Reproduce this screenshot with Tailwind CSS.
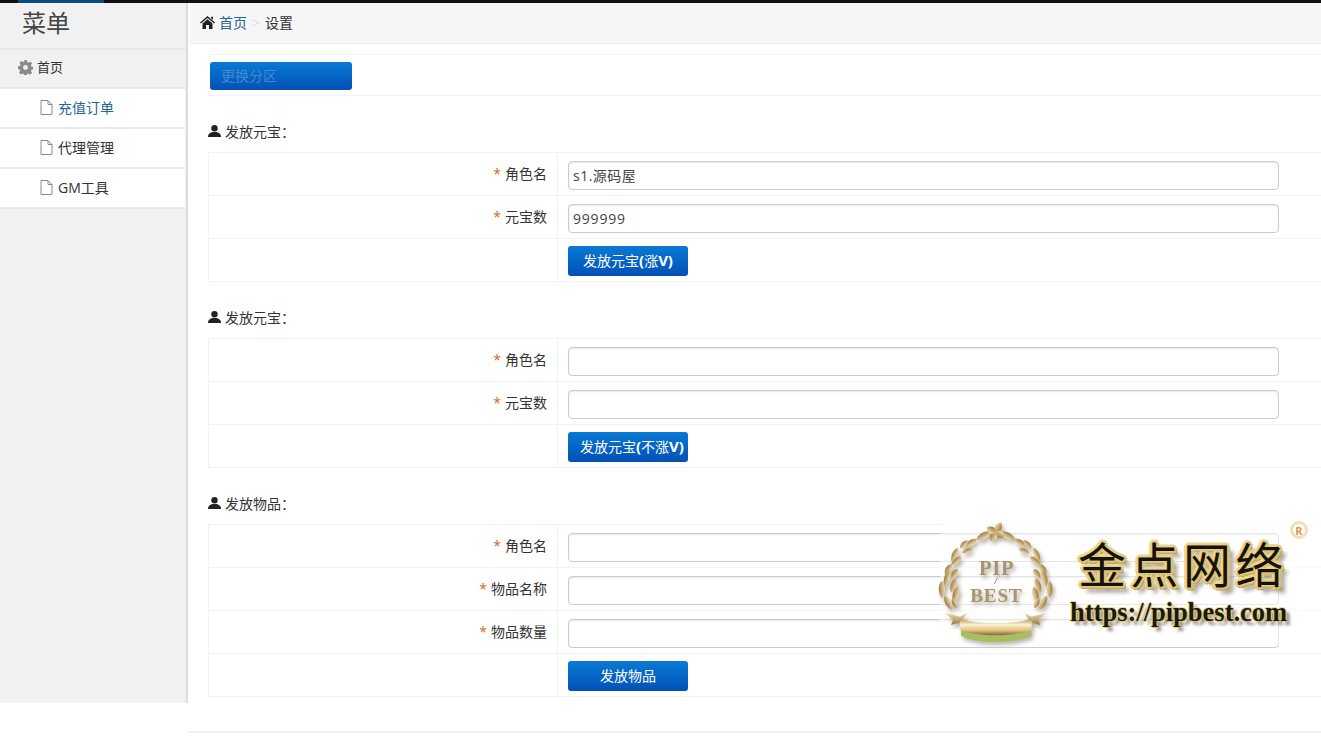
<!DOCTYPE html>
<html lang="zh-CN">

<head>
    <meta charset="UTF-8">
    <title>设置</title>
    <script src="https://cdn.jsdelivr.net/npm/@tailwindcss/browser@4"></script>
</head>

<body class="relative h-[751px] w-[1321px] overflow-hidden bg-white font-['Open_Sans','Noto_Sans_CJK_SC',sans-serif] text-[14px] text-[#333]">
    <!-- top bar -->
    <div class="h-[3px] bg-[#111] pl-[18px]">
        <div class="h-[3px] w-[86px] bg-[#0b4a80]"></div>
    </div>

    <div class="flex items-start">
        <!-- sidebar -->
        <aside class="h-[700px] w-[188px] shrink-0 border-r-2 border-[#dcdcdc] bg-[#f1f1f1]">
            <div class="h-[45px] pl-[22px] pt-[2px] text-[24px] leading-[36px] text-[#444]">菜单</div>
            <div class="flex h-[41px] items-center gap-[4px] border-y-2 border-[#e8e8e8] pb-[2px] pl-[18px] text-[13px]">
                <svg class="h-[15px] w-[15px] text-[#8a8a8a]" viewBox="0 0 16 16" fill="currentColor"><path fill-rule="evenodd" d="M6.6 0h2.8l.4 2.2 1.3.6L13 1.6l2 2-1.2 1.9.5 1.3 2.2.4v2.8l-2.200.4-.5 1.3 1.2 1.900-2 2-1.900-1.200-1.300.5-.4 2.200H6.600l-.4-2.200-1.300-.5L3 15.400l-2-2 1.200-1.900-.6-1.300L0 9.400V6.600l2.200-.4.6-1.300L1.600 3l2-2 1.900 1.200 1.300-.6zM8 5.400a2.600 2.600 0 1 0 0 5.200 2.600 2.600 0 0 0 0-5.200z"/></svg>
                <span>首页</span>
            </div>
            <div class="mr-[1px] box-content flex h-[36px] items-center gap-[5px] border-b-2 border-[#e8e8e8] bg-white pb-[2px] pl-[40px] text-[#2a6496]">
                <svg class="h-[15px] w-[13px] text-[#888]" viewBox="0 0 13 15" fill="none" stroke="currentColor"><path d="M1 .5h7l4 4v10H1zM8 .5v4h4"/></svg>
                <span>充值订单</span>
            </div>
            <div class="mr-[1px] box-content flex h-[36px] items-center gap-[5px] border-b-2 border-[#e8e8e8] bg-white pb-[2px] pl-[40px]">
                <svg class="h-[15px] w-[13px] text-[#888]" viewBox="0 0 13 15" fill="none" stroke="currentColor"><path d="M1 .5h7l4 4v10H1zM8 .5v4h4"/></svg>
                <span>代理管理</span>
            </div>
            <div class="mr-[1px] box-content flex h-[36px] items-center gap-[5px] border-b-2 border-[#e8e8e8] bg-white pb-[2px] pl-[40px]">
                <svg class="h-[15px] w-[13px] text-[#888]" viewBox="0 0 13 15" fill="none" stroke="currentColor"><path d="M1 .5h7l4 4v10H1zM8 .5v4h4"/></svg>
                <span>GM工具</span>
            </div>
        </aside>

        <!-- main -->
        <main class="min-w-0 flex-1">
            <div class="ml-[2px] flex h-[41px] items-center border-b border-[#ececec] bg-[#f6f6f6] pb-[2px] pl-[10px]">
                <svg class="mr-[4px] h-[13px] w-[15px] text-[#222]" viewBox="0 0 15 13" fill="currentColor"><path d="M7.500 0 15 6.600l-.9 1L7.500 1.900.9 7.600 0 6.600zM7.500 3.200l5 4.300V13H9V9H6v4H2.500V7.500z"/><path d="M11 .8h2v3l-2-1.700z"/></svg>
                <span class="text-[#2a6496]">首页</span>
                <span class="mx-[5px] text-[#ddd]">&gt;</span>
                <span>设置</span>
            </div>

            <div class="ml-[20px] mr-[-4px]">
                <div class="mt-[10px] flex h-[42px] items-center border-y border-[#f2f2f2] pl-[2px] pt-[2px]">
                    <button class="h-[28px] w-[142px] rounded-[3px] bg-linear-to-b from-[#0b7ad4] to-[#0450b5] pb-[2px] pl-[11px] text-left text-[#4489d2]">更换分区</button>
                </div>

                <!-- section 1 -->
                <div class="mt-[26px] flex h-[20px] items-center gap-[4px] pb-[2px]">
                    <svg class="h-[12px] w-[13px] text-[#222]" viewBox="0 0 13 12" fill="currentColor"><circle cx="6.500" cy="3.200" r="3.200"/><path d="M0 12c0-3.500 2.500-4.500 4.500-5h4c2 .5 4.500 1.500 4.500 5z"/></svg>
                    <span>发放元宝：</span>
                </div>
                <div class="mt-[10px] border border-[#f2f2f2]">
                    <div class="grid h-[43px] grid-cols-[349px_1fr] border-b border-[#f2f2f2]">
                        <div class="flex items-start justify-end border-r border-[#f2f2f2] pr-[10px] pt-[10px]"><span class="mr-[4px] text-[#d2691e]">*</span>角色名</div>
                        <div class="pl-[10px] pt-[8px]"><input value="s1.源码屋" class="h-[29px] w-[711px] rounded-[4px] border border-[#ccc] px-[4px] pb-[2px] text-[14px] tracking-[0.5px] text-[#444] shadow-[inset_0_1px_2px_rgba(0,0,0,0.1)]"></div>
                    </div>
                    <div class="grid h-[43px] grid-cols-[349px_1fr] border-b border-[#f2f2f2]">
                        <div class="flex items-start justify-end border-r border-[#f2f2f2] pr-[10px] pt-[10px]"><span class="mr-[4px] text-[#d2691e]">*</span>元宝数</div>
                        <div class="pl-[10px] pt-[8px]"><input value="999999" class="h-[29px] w-[711px] rounded-[4px] border border-[#ccc] px-[4px] text-[14px] tracking-[0.8px] text-[#444] shadow-[inset_0_1px_2px_rgba(0,0,0,0.1)]"></div>
                    </div>
                    <div class="grid h-[42px] grid-cols-[349px_1fr]">
                        <div class="border-r border-[#f2f2f2]"></div>
                        <div class="pl-[10px] pt-[7px]"><button class="h-[30px] w-[120px] whitespace-nowrap rounded-[3px] bg-linear-to-b from-[#0b7ad4] to-[#0450b5] pb-[2px] text-[14px] text-white">发放元宝<b class="text-[15px]">(</b>涨<b class="text-[15px]">V)</b></button></div>
                    </div>
                </div>

                <!-- section 2 -->
                <div class="mt-[26px] flex h-[20px] items-center gap-[4px] pb-[2px]">
                    <svg class="h-[12px] w-[13px] text-[#222]" viewBox="0 0 13 12" fill="currentColor"><circle cx="6.500" cy="3.200" r="3.200"/><path d="M0 12c0-3.500 2.500-4.500 4.500-5h4c2 .5 4.500 1.500 4.500 5z"/></svg>
                    <span>发放元宝：</span>
                </div>
                <div class="mt-[10px] border border-[#f2f2f2]">
                    <div class="grid h-[43px] grid-cols-[349px_1fr] border-b border-[#f2f2f2]">
                        <div class="flex items-start justify-end border-r border-[#f2f2f2] pr-[10px] pt-[10px]"><span class="mr-[4px] text-[#d2691e]">*</span>角色名</div>
                        <div class="pl-[10px] pt-[8px]"><input class="h-[29px] w-[711px] rounded-[4px] border border-[#ccc] px-[4px] shadow-[inset_0_1px_2px_rgba(0,0,0,0.1)]"></div>
                    </div>
                    <div class="grid h-[43px] grid-cols-[349px_1fr] border-b border-[#f2f2f2]">
                        <div class="flex items-start justify-end border-r border-[#f2f2f2] pr-[10px] pt-[10px]"><span class="mr-[4px] text-[#d2691e]">*</span>元宝数</div>
                        <div class="pl-[10px] pt-[8px]"><input class="h-[29px] w-[711px] rounded-[4px] border border-[#ccc] px-[4px] shadow-[inset_0_1px_2px_rgba(0,0,0,0.1)]"></div>
                    </div>
                    <div class="grid h-[42px] grid-cols-[349px_1fr]">
                        <div class="border-r border-[#f2f2f2]"></div>
                        <div class="pl-[10px] pt-[7px]"><button class="h-[30px] w-[120px] whitespace-nowrap rounded-[3px] bg-linear-to-b from-[#0b7ad4] to-[#0450b5] pb-[2px] pl-[12px] text-left text-[14px] text-white">发放元宝<b class="text-[15px]">(</b>不涨<b class="text-[15px]">V)</b></button></div>
                    </div>
                </div>

                <!-- section 3 -->
                <div class="mt-[26px] flex h-[20px] items-center gap-[4px] pb-[2px]">
                    <svg class="h-[12px] w-[13px] text-[#222]" viewBox="0 0 13 12" fill="currentColor"><circle cx="6.500" cy="3.200" r="3.200"/><path d="M0 12c0-3.500 2.500-4.500 4.500-5h4c2 .5 4.500 1.500 4.500 5z"/></svg>
                    <span>发放物品：</span>
                </div>
                <div class="mt-[10px] border border-[#f2f2f2]">
                    <div class="grid h-[43px] grid-cols-[349px_1fr] border-b border-[#f2f2f2]">
                        <div class="flex items-start justify-end border-r border-[#f2f2f2] pr-[10px] pt-[10px]"><span class="mr-[4px] text-[#d2691e]">*</span>角色名</div>
                        <div class="pl-[10px] pt-[8px]"><input class="h-[29px] w-[711px] rounded-[4px] border border-[#ccc] px-[4px] shadow-[inset_0_1px_2px_rgba(0,0,0,0.1)]"></div>
                    </div>
                    <div class="grid h-[43px] grid-cols-[349px_1fr] border-b border-[#f2f2f2]">
                        <div class="flex items-start justify-end border-r border-[#f2f2f2] pr-[10px] pt-[10px]"><span class="mr-[4px] text-[#d2691e]">*</span>物品名称</div>
                        <div class="pl-[10px] pt-[8px]"><input class="h-[29px] w-[711px] rounded-[4px] border border-[#ccc] px-[4px] shadow-[inset_0_1px_2px_rgba(0,0,0,0.1)]"></div>
                    </div>
                    <div class="grid h-[43px] grid-cols-[349px_1fr] border-b border-[#f2f2f2]">
                        <div class="flex items-start justify-end border-r border-[#f2f2f2] pr-[10px] pt-[10px]"><span class="mr-[4px] text-[#d2691e]">*</span>物品数量</div>
                        <div class="pl-[10px] pt-[8px]"><input class="h-[29px] w-[711px] rounded-[4px] border border-[#ccc] px-[4px] shadow-[inset_0_1px_2px_rgba(0,0,0,0.1)]"></div>
                    </div>
                    <div class="grid h-[42px] grid-cols-[349px_1fr]">
                        <div class="border-r border-[#f2f2f2]"></div>
                        <div class="pl-[10px] pt-[7px]"><button class="h-[30px] w-[120px] rounded-[3px] bg-linear-to-b from-[#0b7ad4] to-[#0450b5] pb-[2px] text-[14px] text-white">发放物品</button></div>
                    </div>
                </div>
            </div>

            <!-- footer line -->
            <div class="mt-[34px] border-t-2 border-[#f0f0f0]"></div>
        </main>
    </div>

    <!-- watermark over the page -->
    <div class="absolute left-[940px] top-[520px] h-[125px] w-[381px] bg-white/50"></div>
    <svg class="absolute left-[935px] top-[515px] drop-shadow-[2px_3px_2px_rgba(90,80,50,0.45)]" width="125" height="130" viewBox="0 0 375 390">
        <defs>
            <linearGradient id="gold" x1="0" y1="0" x2="0" y2="1">
                <stop offset="0" stop-color="#f0dfb0"/>
                <stop offset="1" stop-color="#9c7a40"/>
            </linearGradient>
            <linearGradient id="ribbon" x1="0" y1="0" x2="0" y2="1">
                <stop offset="0" stop-color="#b89450"/>
                <stop offset="0.35" stop-color="#fbf2d2"/>
                <stop offset="0.7" stop-color="#e0c07c"/>
                <stop offset="1" stop-color="#8a6430"/>
            </linearGradient>
            <!-- leaf from base (0,0) to tip (60,0) -->
            <path id="leaf" d="M0 0C12-17 42-17 60 0C42 15 12 15 0 0z" fill="url(#gold)"/>
            <g id="branch">
                <use href="#leaf" transform="translate(165 50) rotate(150) scale(.8 .8)"/>
                <use href="#leaf" transform="translate(125 72) rotate(148) scale(.7 .7)"/>
                <use href="#leaf" transform="translate(112 102) rotate(160) scale(.55 .6)"/>
                <use href="#leaf" transform="translate(98 76) rotate(135) scale(.55 .6)"/>
                <use href="#leaf" transform="translate(78 125) rotate(140) scale(.65 .7)"/>
                <use href="#leaf" transform="translate(68 98) rotate(115) scale(.75 .65)"/>
                <use href="#leaf" transform="translate(50 148) rotate(125) scale(.6 .7)"/>
                <use href="#leaf" transform="translate(42 165) rotate(105) scale(.9 .7)"/>
                <use href="#leaf" transform="translate(68 162) rotate(125) scale(.55 .7)"/>
                <use href="#leaf" transform="translate(62 190) rotate(108) scale(.75 .75)"/>
                <use href="#leaf" transform="translate(20 198) rotate(90) scale(.85 .75)"/>
                <use href="#leaf" transform="translate(28 242) rotate(62) scale(.8 .75)"/>
                <use href="#leaf" transform="translate(68 215) rotate(105) scale(.85 .75)"/>
                <use href="#leaf" transform="translate(52 250) rotate(65) scale(.55 .6)"/>
            </g>
        </defs>
        <use href="#branch"/>
        <use href="#branch" transform="translate(364 0) scale(-1 1)"/>
        <!-- top sprig -->
        <g transform="translate(182 52)">
            <use href="#leaf" transform="rotate(-60) scale(.55 .9)"/>
            <use href="#leaf" transform="rotate(30) scale(.5 .9)"/>
            <use href="#leaf" transform="rotate(120) scale(.5 .9)"/>
            <use href="#leaf" transform="rotate(-150) scale(.5 .9)"/>
        </g>
        <!-- ribbon tails -->
        <path d="M30 293 75 305 96 293 78 322 48 330 54 314zM334 293 289 305 268 293 286 322 316 330 310 314z" fill="url(#gold)"/>
        <!-- ribbon -->
        <path d="M78 345C130 368 230 368 286 345L290 362C230 386 130 386 78 362z" fill="#a6bd60"/>
        <path d="M74 312C130 329 230 329 290 312L290 345C230 366 130 366 76 345z" fill="url(#ribbon)"/>
        <text x="185" y="180" text-anchor="middle" font-family="Liberation Serif" font-size="62" font-weight="700" letter-spacing="2" fill="#a8946e">PIP</text>
        <text x="182" y="208" text-anchor="middle" font-family="Liberation Serif" font-size="26" font-style="italic" font-weight="700" fill="#6a5a30">/</text>
        <text x="184" y="262" text-anchor="middle" font-family="Liberation Serif" font-size="58" font-weight="700" letter-spacing="2" fill="#a8946e">BEST</text>
    </svg>
    <div class="absolute left-[1078px] top-[533px] font-['Noto_Sans_CJK_SC',sans-serif] text-[48px] leading-[58px] tracking-[4.5px] whitespace-nowrap text-[#17130a] [text-shadow:1px_0_0_#e2cb83,-1px_0_0_#e2cb83,0_1px_0_#e2cb83,0_-1px_0_#e2cb83,2px_2px_0_#d8bf74,-2px_-2px_0_#ecd997,2px_-2px_0_#e2cb83,-2px_2px_0_#e2cb83,3px_0_0_#d8bf74,-3px_0_0_#e8d48f,0_3px_0_#c9ab5f,0_-3px_0_#ecd997,3px_3px_0_#b99a50,6px_6px_4px_rgba(70,60,35,0.6)]">金点网络</div>
    <div class="absolute left-[1070px] top-[597px] font-['Liberation_Serif',serif] text-[26.5px] font-bold leading-[30px] whitespace-nowrap text-[#1d1a08] [text-shadow:1px_1px_0_#d9bf74,-1px_0_0_#ead78f,0_-1px_0_#ead78f,4px_4px_3px_rgba(60,50,30,0.55)]">https://pipbest.com</div>
    <div class="absolute left-[1290px] top-[521px] flex h-[18px] w-[18px] items-center justify-center rounded-full border-[3px] border-[#f0dfb8] text-[11px] font-bold leading-none text-[#d39a4c]">R</div>
</body>

</html>
